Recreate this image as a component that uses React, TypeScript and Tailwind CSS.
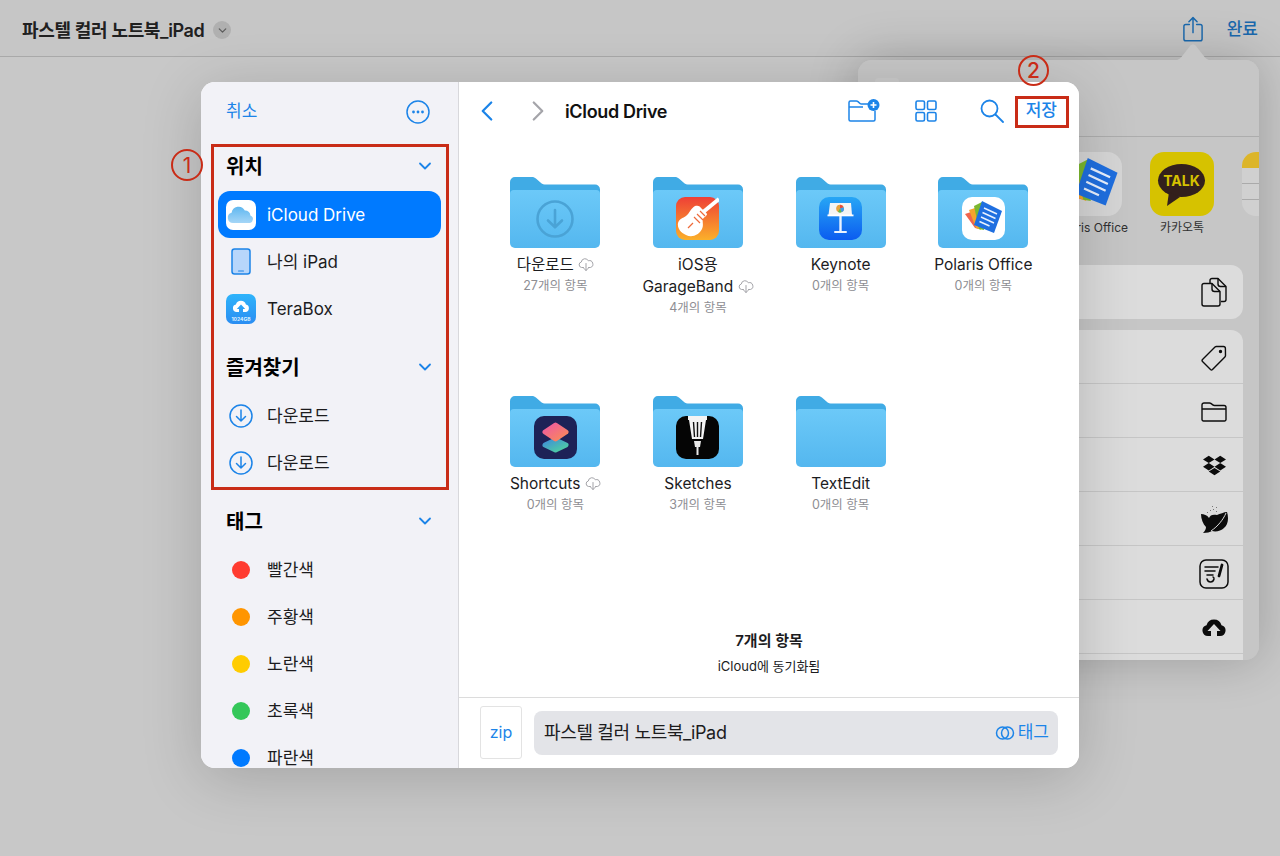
import type { ReactNode } from 'react'
import { ChevronDown, ChevronLeft, ChevronRight } from 'lucide-react'
import { FaDropbox } from 'react-icons/fa'

const FONT = 'font-["Inter","Noto_Sans_CJK_KR",sans-serif]'

function FolderShape() {
  return (
    <svg width="90" height="71" viewBox="0 0 91 71" preserveAspectRatio="none" className="block">
      <defs>
        <linearGradient id="folderFront" x1="0" y1="0" x2="0" y2="1">
          <stop offset="0" stopColor="#6cc9f8" />
          <stop offset="1" stopColor="#54b7ef" />
        </linearGradient>
      </defs>
      <path d="M0 20V5a5 5 0 0 1 5-5h17c2 0 3 .5 4.500 1.700L32 6.500c1 .7 2 1 3 1h51a5 5 0 0 1 5 5V20z" fill="#40abe5" />
      <path d="M0 17a4 4 0 0 1 4-4h83a4 4 0 0 1 4 4v49a5 5 0 0 1-5 5H5a5 5 0 0 1-5-5z" fill="url(#folderFront)" />
    </svg>
  )
}

function DownloadMark() {
  return (
    <svg width="38" height="38" viewBox="0 0 38 38" fill="none" stroke="#4aa3d6" strokeWidth="2.600" strokeLinecap="round" strokeLinejoin="round">
      <circle cx="19" cy="19" r="17.500" />
      <path d="M19 10v17M12 20.500l7 6.800 7-6.800" />
    </svg>
  )
}

function GarageBandIcon() {
  return (
    <svg width="43" height="43" viewBox="0 0 43 43">
      <defs>
        <linearGradient id="gbBg" x1="0" y1="0" x2="0" y2="1">
          <stop offset="0" stopColor="#ee3f36" />
          <stop offset="1" stopColor="#fbb02a" />
        </linearGradient>
      </defs>
      <rect width="43" height="43" rx="9" fill="url(#gbBg)" />
      <path d="M26 16 43 2" stroke="#fff" strokeWidth="4" />
      <path d="M19 9c3-1 5 0 7 3 2 2 4 3 5 5 0 2-3 3-4 5-1 3 1 6-1 10-3 6-10 9-16 6-5-2-9-7-8-12 1-4 5-5 8-7 3-2 5-8 9-10z" fill="#fff" />
      <path d="M18 20l6 6M21 17l6 6M24 14l5 5" stroke="#ee6a3a" strokeWidth="1.200" />
      <path d="M12 31l5-5" stroke="#ee6a3a" strokeWidth="1.200" />
    </svg>
  )
}

function KeynoteIcon() {
  return (
    <svg width="43" height="43" viewBox="0 0 43 43">
      <defs>
        <linearGradient id="knBg" x1="0" y1="0" x2="0" y2="1">
          <stop offset="0" stopColor="#27a6f5" />
          <stop offset="1" stopColor="#0b5cf0" />
        </linearGradient>
      </defs>
      <rect width="43" height="43" rx="10" fill="url(#knBg)" />
      <path d="M11 6h21l1 12H9.500z" fill="#f4f4f4" />
      <rect x="8.500" y="17.500" width="26" height="1.800" fill="#fff" />
      <circle cx="21" cy="11.500" r="3.800" fill="#e9a13b" />
      <path d="M21 11.500V7.700a3.800 3.800 0 0 1 3.600 2.600z" fill="#e4493f" />
      <path d="M21 11.500l3.600-1.200a3.800 3.800 0 0 1-2 5z" fill="#3d9be9" />
      <path d="M21 11.500l1.600 3.800a3.800 3.800 0 0 1-3.600-.3z" fill="#5fb84a" />
      <path d="M20.300 19h2.400v15h-2.400z" fill="#eaf3ff" />
      <rect x="15" y="34" width="13" height="2" rx="1" fill="#eaf3ff" />
    </svg>
  )
}

function PolarisIcon({ size = 43, tile = '#ffffff' }: { size?: number; tile?: string }) {
  return (
    <svg width={size} height={size} viewBox="0 0 43 43">
      <rect width="43" height="43" rx="10" fill={tile} />
      <path d="M3 17l6-2 8 17-4-1z" fill="#f0654d" />
      <path d="M7 13l6-2 6 22-5-2z" fill="#f5a42c" />
      <path d="M12 9l8-4 2 28-5-1z" fill="#7cb82f" />
      <path d="M20 4l20 10-8 22-20-8z" fill="#1f6fe0" />
      <path d="M22 11l13 6M20.500 15.500l13 6M19 20l13 6M17.500 24.500l10 4.500" stroke="#e8f1ff" strokeWidth="1.500" />
    </svg>
  )
}

function ShortcutsIcon() {
  return (
    <svg width="43" height="43" viewBox="0 0 43 43">
      <defs>
        <linearGradient id="scTop" x1="0" y1="0" x2="1" y2="1">
          <stop offset="0" stopColor="#ee5aa0" />
          <stop offset="1" stopColor="#f98a58" />
        </linearGradient>
        <linearGradient id="scBottom" x1="0" y1="0" x2="1" y2="1">
          <stop offset="0" stopColor="#3f8fd8" />
          <stop offset="1" stopColor="#4fd1a0" />
        </linearGradient>
      </defs>
      <rect width="43" height="43" rx="10" fill="#1d2257" />
      <path d="M21.500 24 32 29 21.500 34 11 29z" fill="url(#scBottom)" stroke="url(#scBottom)" strokeWidth="5" strokeLinejoin="round" />
      <path d="M21.500 9 32 16 21.500 23 11 16z" fill="url(#scTop)" stroke="url(#scTop)" strokeWidth="5" strokeLinejoin="round" />
    </svg>
  )
}

function SketchesIcon() {
  return (
    <svg width="43" height="43" viewBox="0 0 43 43">
      <rect width="43" height="43" rx="10" fill="#050505" />
      <path d="M12 0h19v4h-1l-3 19h-11l-3-19h-1z" fill="#f4f4f4" />
      <path d="M17.500 6l1 15M21.500 6v15M25.500 6l-1 15" stroke="#111" strokeWidth="1.400" />
      <path d="M18 25h7l-1 6h-5z" fill="#e8e8e8" />
      <rect x="20.500" y="31" width="2" height="8" fill="#e8e8e8" />
    </svg>
  )
}

function CloudDown() {
  return (
    <svg width="16" height="13" viewBox="0 0 16 13" fill="none" stroke="#a3a3a8" strokeWidth="1" strokeLinecap="round" strokeLinejoin="round" className="inline-block align-[-1px]">
      <path d="M5.500 9.500H3.600A2.800 2.800 0 0 1 3.300 4a3.700 3.700 0 0 1 7-1.200A3.300 3.300 0 0 1 12.400 9.500H10.500" />
      <path d="M8 5.500v7M5.800 10.300 8 12.500l2.200-2.200" />
    </svg>
  )
}

type FolderItem = {
  name: ReactNode
  count: string
  badge?: ReactNode
}

const folders: FolderItem[] = [
  { name: <>다운로드 <CloudDown /></>, count: '27개의 항목', badge: <DownloadMark /> },
  { name: <>iOS용<br />GarageBand <CloudDown /></>, count: '4개의 항목', badge: <GarageBandIcon /> },
  { name: 'Keynote', count: '0개의 항목', badge: <KeynoteIcon /> },
  { name: 'Polaris Office', count: '0개의 항목', badge: <PolarisIcon /> },
  { name: <>Shortcuts <CloudDown /></>, count: '0개의 항목', badge: <ShortcutsIcon /> },
  { name: 'Sketches', count: '3개의 항목', badge: <SketchesIcon /> },
  { name: 'TextEdit', count: '0개의 항목' },
]

function Folder({ item }: { item: FolderItem }) {
  return (
    <div className="flex flex-col items-center">
      <div className="relative h-[71px] w-[90px]">
        <FolderShape />
        {item.badge && (
          <div className="absolute inset-x-0 top-[20px] flex h-[43px] items-center justify-center">{item.badge}</div>
        )}
      </div>
      <div className="mt-[6px] whitespace-nowrap text-center text-[15.5px] leading-[22px] text-[#1c1c1e]">{item.name}</div>
      <div className="text-[12.5px] leading-[19px] text-[#8e8e93]">{item.count}</div>
    </div>
  )
}

function SectionHeader({ title }: { title: string }) {
  return (
    <div className="flex h-[50px] shrink-0 items-center justify-between pl-[25px] pr-[23px]">
      <span className="pt-[2px] text-[20px] font-semibold text-black">{title}</span>
      <ChevronDown size={20} strokeWidth={2.200} className="text-[#1c84e8]" />
    </div>
  )
}

function SideRow({ icon, label, active }: { icon: ReactNode; label: string; active?: boolean }) {
  return (
    <div className={`mx-[17px] flex h-[47px] w-[223px] shrink-0 items-center rounded-xl pl-[8px] ${active ? 'bg-[#007aff] text-white' : 'text-[#1c1c1e]'}`}>
      <div className="flex w-[30px] items-center justify-center">{icon}</div>
      <span className="ml-[11px] pt-[2px] text-[17px]">{label}</span>
    </div>
  )
}

function ICloudTile() {
  return (
    <svg width="30" height="30" viewBox="0 0 30 30">
      <defs>
        <linearGradient id="cloudFill" x1="0" y1="0" x2="0" y2="1">
          <stop offset="0" stopColor="#5fb7f0" />
          <stop offset="1" stopColor="#a5d6f7" />
        </linearGradient>
      </defs>
      <rect width="30" height="30" rx="7" fill="#fff" />
      <path d="M7 23a5.200 5.200 0 0 1-1.400-10.200 7 7 0 0 1 13.200-2.200 5.200 5.200 0 0 1 5.600 4.800A4 4 0 0 1 24 23z" fill="url(#cloudFill)" />
    </svg>
  )
}

function IPadGlyph() {
  return (
    <svg width="20" height="27" viewBox="0 0 20 27">
      <rect x="1" y="1" width="18" height="25" rx="2.500" fill="#b7d6fb" stroke="#1c84e8" strokeWidth="1.500" />
      <rect x="7" y="22.500" width="6" height="1" rx=".5" fill="#1c84e8" />
    </svg>
  )
}

function TeraBoxTile() {
  return (
    <svg width="30" height="30" viewBox="0 0 30 30">
      <defs>
        <linearGradient id="tbBg" x1="0" y1="0" x2="0" y2="1">
          <stop offset="0" stopColor="#2fb4fb" />
          <stop offset="1" stopColor="#2a8df2" />
        </linearGradient>
      </defs>
      <rect width="30" height="30" rx="7" fill="url(#tbBg)" />
      <path d="M10.500 18a3.800 3.800 0 0 1-.6-7.500 5.200 5.200 0 0 1 10 0 3.800 3.800 0 0 1-.5 7.500H17v-3h2.200L15 10.500 10.800 15H13v3z" fill="#fff" />
      <text x="15" y="27" textAnchor="middle" fontSize="5" fontWeight="700" fill="#dff2ff" fontFamily="Inter">1024GB</text>
    </svg>
  )
}

function DownloadCircle() {
  return (
    <svg width="24" height="24" viewBox="0 0 24 24" fill="none" stroke="#1c84e8" strokeWidth="1.500" strokeLinecap="round" strokeLinejoin="round">
      <circle cx="12" cy="12" r="11" />
      <path d="M12 6v11M7.500 12.500 12 17l4.500-4.500" />
    </svg>
  )
}

function Dot({ color }: { color: string }) {
  return <span className={`block h-[18px] w-[18px] rounded-full ${color}`} />
}

function Sidebar() {
  return (
    <aside className="flex h-full w-[258px] shrink-0 flex-col overflow-hidden border-r border-[#d8d8dc] bg-[#f2f2f7]">
      <div className="flex h-[59px] shrink-0 items-center justify-between pl-[25px] pr-[28px]">
        <span className="text-[17px] text-[#1c84e8]">취소</span>
        <svg width="24" height="24" viewBox="0 0 24 24" fill="none">
          <circle cx="12" cy="12" r="11" stroke="#1c84e8" strokeWidth="1.500" />
          <circle cx="7.500" cy="12" r="1.400" fill="#1c84e8" />
          <circle cx="12" cy="12" r="1.400" fill="#1c84e8" />
          <circle cx="16.500" cy="12" r="1.400" fill="#1c84e8" />
        </svg>
      </div>
      <SectionHeader title="위치" />
      <SideRow active icon={<ICloudTile />} label="iCloud Drive" />
      <SideRow icon={<IPadGlyph />} label="나의 iPad" />
      <SideRow icon={<TeraBoxTile />} label="TeraBox" />
      <div className="h-[10px] shrink-0" />
      <SectionHeader title="즐겨찾기" />
      <SideRow icon={<DownloadCircle />} label="다운로드" />
      <SideRow icon={<DownloadCircle />} label="다운로드" />
      <div className="h-[10px] shrink-0" />
      <SectionHeader title="태그" />
      <SideRow icon={<Dot color="bg-[#ff3b30]" />} label="빨간색" />
      <SideRow icon={<Dot color="bg-[#ff9500]" />} label="주황색" />
      <SideRow icon={<Dot color="bg-[#ffcc00]" />} label="노란색" />
      <SideRow icon={<Dot color="bg-[#34c759]" />} label="초록색" />
      <SideRow icon={<Dot color="bg-[#007aff]" />} label="파란색" />
    </aside>
  )
}

function Toolbar() {
  return (
    <div className="flex h-[58px] shrink-0 items-center text-[#1c84e8]">
      <ChevronLeft size={34} strokeWidth={1.600} className="ml-[11px]" />
      <ChevronRight size={34} strokeWidth={1.600} className="ml-[17px] text-[#a5a5aa]" />
      <span className="ml-[10px] text-[18px] font-semibold tracking-[-0.35px] text-[#111]">iCloud Drive</span>
      <div className="flex-1" />
      <svg width="32" height="24" viewBox="0 0 32 24" fill="none">
        <path d="M1 6V3.500A1.500 1.500 0 0 1 2.500 2h6c.7 0 1 .2 1.500.6L12 4.500c.4.4.8.500 1.500.500H22M1 8h14M1 6v14.500A1.500 1.500 0 0 0 2.500 22h23a1.500 1.500 0 0 0 1.500-1.500V12" stroke="#1c84e8" strokeWidth="1.500" />
        <circle cx="25.500" cy="6" r="6" fill="#1c84e8" />
        <path d="M25.500 3v6M22.500 6h6" stroke="#fff" strokeWidth="1.600" />
      </svg>
      <svg className="ml-[35px]" width="22" height="22" viewBox="0 0 22 22" fill="none" stroke="#1c84e8" strokeWidth="1.600">
        <rect x="1" y="1" width="8.500" height="8.500" rx="1.500" />
        <rect x="12.500" y="1" width="8.500" height="8.500" rx="1.500" />
        <rect x="1" y="12.500" width="8.500" height="8.500" rx="1.500" />
        <rect x="12.500" y="12.500" width="8.500" height="8.500" rx="1.500" />
      </svg>
      <svg className="ml-[43px]" width="24" height="24" viewBox="0 0 24 24" fill="none" stroke="#1c84e8" strokeWidth="1.800" strokeLinecap="round">
        <circle cx="9.500" cy="9.500" r="8" />
        <path d="M15.500 15.500 23 23" />
      </svg>
      <span className="ml-[22px] mr-[22px] text-[17px] font-medium">저장</span>
    </div>
  )
}

function MainPane() {
  return (
    <main className="flex h-full min-w-0 flex-1 flex-col bg-white">
      <Toolbar />
      <div className="grid flex-1 grid-cols-[repeat(4,142.67px)] auto-rows-[219px] pl-[25px] pt-[37px]">
        {folders.map((item, i) => (
          <Folder key={i} item={item} />
        ))}
      </div>
      <div className="mb-[22px] text-center text-[#1c1c1e]">
        <div className="text-[15px] font-semibold leading-[20px]">7개의 항목</div>
        <div className="mt-[6px] text-[13px] leading-[18px]">iCloud에 동기화됨</div>
      </div>
      <div className="flex h-[71px] shrink-0 items-center border-t border-[#dcdcdc] pb-[1px] pl-[21px] pr-[21px]">
        <div className="flex h-[53px] w-[42px] items-center justify-center rounded-[3px] border border-[#e3e3e3] pb-[2px] text-[16px] text-[#1c84e8]">zip</div>
        <div className="ml-[12px] flex h-[44px] flex-1 items-center justify-between rounded-lg bg-[#e3e4e8] pl-[10px] pr-[9px]">
          <span className="text-[18px] tracking-[-0.35px] text-[#1c1c1e]">파스텔 컬러 노트북_iPad</span>
          <span className="flex items-center gap-[3px] text-[17px] text-[#1c84e8]">
            <svg width="20" height="14" viewBox="0 0 20 14" fill="none" stroke="#1c84e8" strokeWidth="1.500">
              <circle cx="7.500" cy="7" r="6" />
              <circle cx="12.500" cy="7" r="6" />
            </svg>
            태그
          </span>
        </div>
      </div>
    </main>
  )
}

function ShareRow({ children, last }: { children: ReactNode; last?: boolean }) {
  return (
    <div className={`flex h-[54px] shrink-0 items-center justify-end pr-[15px] ${last ? '' : 'border-b border-[#c6c6c6]'}`}>
      <div className="flex w-[28px] items-center justify-center text-[#0c0c0c]">{children}</div>
    </div>
  )
}

function SharePopover() {
  return (
    <>
      <div className="absolute left-[858px] top-[60px] h-[600px] w-[401px] rounded-[14px] shadow-[0_0_50px_rgba(0,0,0,0.22)]" />
      <svg className="absolute left-[1171px] top-[43px]" width="44" height="18" viewBox="0 0 44 18">
        <path d="M0 18c6 0 9-2 12-6l7-9c1.500-2 4.500-2 6 0l7 9c3 4 6 6 12 6z" fill="#c6c6c6" />
      </svg>
      <div className="absolute left-[858px] top-[60px] flex h-[600px] w-[401px] flex-col overflow-hidden rounded-[14px] bg-[#c6c6c6]">
        <div className="flex h-[77px] shrink-0 border-b border-[#adadad] pl-[17px] pt-[18px]">
          <div className="h-[40px] w-[24px] rounded-[4px] bg-[#cbcbcb]" />
        </div>
        <div className="flex h-[128px] shrink-0 gap-[28px] pl-[200px] pt-[15px]">
          <div className="flex w-[64px] shrink-0 flex-col items-center">
            <PolarisIcon size={64} tile="#d6d6d6" />
            <span className="mt-[3px] whitespace-nowrap text-[12px] leading-[18px] text-[#303030]">Polaris Office</span>
          </div>
          <div className="flex w-[64px] shrink-0 flex-col items-center">
            <svg width="64" height="64" viewBox="0 0 64 64">
              <rect width="64" height="64" rx="14" fill="#d6c200" />
              <ellipse cx="31.500" cy="28.500" rx="23.500" ry="16.500" fill="#33201c" />
              <path d="M19 40l-2 14 13-9z" fill="#33201c" />
              <text x="31.500" y="33.500" textAnchor="middle" fontSize="14" fontWeight="700" fill="#d6c200" fontFamily="Inter">TALK</text>
            </svg>
            <span className="mt-[3px] whitespace-nowrap text-[12px] leading-[18px] text-[#303030]">카카오톡</span>
          </div>
          <div className="flex h-[64px] w-[64px] shrink-0 flex-col overflow-hidden rounded-[14px] bg-[#d0d0d0]">
            <div className="h-[16px] bg-[#dcb52a]" />
            <div className="mt-[15px] h-px bg-[#aaa]" />
            <div className="mt-[15px] h-px bg-[#aaa]" />
          </div>
        </div>
        <div className="mx-[16px] flex h-[54px] shrink-0 items-center justify-end rounded-xl bg-[#dcdcdc] pr-[15px]">
          <svg width="28" height="30" viewBox="0 0 28 30" fill="none" stroke="#0c0c0c" strokeWidth="1.400" strokeLinejoin="round">
            <path d="M10 6V3.500A2 2 0 0 1 12 1.500h6l8 8v13a2 2 0 0 1-2 2h-3" />
            <path d="M18 1.500V7a2.500 2.500 0 0 0 2.500 2.500H26" />
            <path d="M2 8.500a2 2 0 0 1 2-2h8l8 8v12.500a2 2 0 0 1-2 2H4a2 2 0 0 1-2-2z" />
            <path d="M12 6.500V12a2.500 2.500 0 0 0 2.500 2.500H20" />
          </svg>
        </div>
        <div className="mx-[16px] mt-[11px] flex flex-col rounded-t-xl bg-[#dcdcdc]">
          <ShareRow>
            <svg width="26" height="26" viewBox="0 0 26 26" fill="none" stroke="#0c0c0c" strokeWidth="1.400" strokeLinejoin="round" className="translate-y-[1px]">
              <path d="M1.500 14.500 14 2a2 2 0 0 1 1.400-.5h7a2 2 0 0 1 2 2l.1 7c0 .5-.2 1-.6 1.400L11.500 24.500a1.500 1.500 0 0 1-2 0l-8-8a1.500 1.500 0 0 1 0-2z" />
              <circle cx="19.500" cy="6.500" r="1" fill="#0c0c0c" />
            </svg>
          </ShareRow>
          <ShareRow>
            <svg width="26" height="20" viewBox="0 0 26 20" fill="none" stroke="#0c0c0c" strokeWidth="1.400" className="translate-y-[1px]">
              <path d="M1 17.500V3a2 2 0 0 1 2-2h5.500c.7 0 1.200.2 1.700.6l1.600 1.300c.5.4 1 .6 1.700.6H23a2 2 0 0 1 2 2v12a1.500 1.500 0 0 1-1.500 1.500h-21A1.500 1.500 0 0 1 1 17.500zM1 7h24" />
            </svg>
          </ShareRow>
          <ShareRow>
            <FaDropbox size={23} className="translate-y-[1px]" />
          </ShareRow>
          <ShareRow>
            <svg width="28" height="28" viewBox="0 0 28 28">
              <path d="M1 9c3 0 6 1 8 4 1-3 4-4 8-3 3-1 7-3 10-3 2 6 1 13-3 16-3 3-8 4-12 3-2 1-5 2-9 2 2-2 3-4 3-6C3 19 1 14 1 9z" fill="#0c0c0c" />
              <path d="M26 8c-3 7-8 13-15 18" stroke="#dcdcdc" strokeWidth="1" fill="none" />
              <path d="M7 8l1-1M10 6l1-1M13 5l1-1M16 3l1-1M12 2l1-1M16 7l1-1" stroke="#777" strokeWidth="1" />
            </svg>
          </ShareRow>
          <ShareRow>
            <svg width="30" height="30" viewBox="0 0 30 30" fill="none" stroke="#0c0c0c" strokeWidth="1.500" strokeLinecap="round" className="shrink-0 translate-y-[1px]">
              <rect x="1" y="1" width="28" height="28" rx="6" />
              <path d="M6 8h13M6 12h10M8 16h6" />
              <path d="M23 6l-3 11" strokeWidth="2.800" />
              <path d="M8 20c1 4 6 4 7 0 0-1-.5-2-1-2" />
            </svg>
          </ShareRow>
          <ShareRow>
            <svg width="24" height="20" viewBox="0 0 24 20">
              <path d="M6 19a5.500 5.500 0 0 1-1.500-10.800 7.800 7.800 0 0 1 15 0A5.500 5.500 0 0 1 18 19h-3v-5h3.500L12 7l-6.500 7H9v5z" fill="#0c0c0c" />
            </svg>
          </ShareRow>
          <ShareRow last>
            <span />
          </ShareRow>
        </div>
      </div>
    </>
  )
}

function TopBar() {
  return (
    <header className="flex h-[57px] items-center border-b border-[#a9a9a9] bg-[#c6c6c6] pl-[22px] pr-[22px] pt-[4px]">
      <span className="text-[18px] font-semibold tracking-[-0.35px] text-[#202020]">파스텔 컬러 노트북_iPad</span>
      <span className="ml-[9px] flex h-[18px] w-[18px] items-center justify-center rounded-full bg-[#b0b0b0]">
        <ChevronDown size={13} strokeWidth={2.200} className="text-[#5a5a5a]" />
      </span>
      <div className="flex-1" />
      <svg width="20" height="26" viewBox="0 0 22 28" fill="none" stroke="#1a68ad" strokeWidth="1.600" strokeLinecap="round" strokeLinejoin="round" className="mr-[1px] -translate-y-[1px]">
        <path d="M7 9H3a2 2 0 0 0-2 2v14a2 2 0 0 0 2 2h16a2 2 0 0 0 2-2V11a2 2 0 0 0-2-2h-4" />
        <path d="M11 18V1.500M6.500 6 11 1.500 15.500 6" />
      </svg>
      <span className="ml-[23px] text-[17px] font-medium text-[#1a68ad]">완료</span>
    </header>
  )
}

export default function App() {
  return (
    <div className={`relative h-[856px] w-[1280px] overflow-hidden bg-[#c8c8c8] ${FONT}`}>
      <TopBar />
      <SharePopover />

      <div className="absolute left-[201px] top-[82px] flex h-[686px] w-[878px] overflow-hidden rounded-[14px] bg-white shadow-[0_10px_60px_rgba(0,0,0,0.18)]">
        <Sidebar />
        <MainPane />
      </div>

      {/* red callouts drawn over the screenshot */}
      <div className="absolute left-[211px] top-[144px] h-[346px] w-[238px] border-[3px] border-[#c92c17]" />
      <div className="absolute left-[1015px] top-[96px] h-[32px] w-[54px] border-[3px] border-[#c92c17]" />
      <div className="absolute left-[171px] top-[149px] flex h-[32px] w-[32px] items-center justify-center rounded-full border-2 border-[#c92c17] text-[21px] leading-none text-[#c92c17]">1</div>
      <div className="absolute left-[1018px] top-[55px] flex h-[31px] w-[31px] items-center justify-center rounded-full border-2 border-[#c92c17] text-[21px] font-medium leading-none text-[#c92c17]">2</div>
    </div>
  )
}
